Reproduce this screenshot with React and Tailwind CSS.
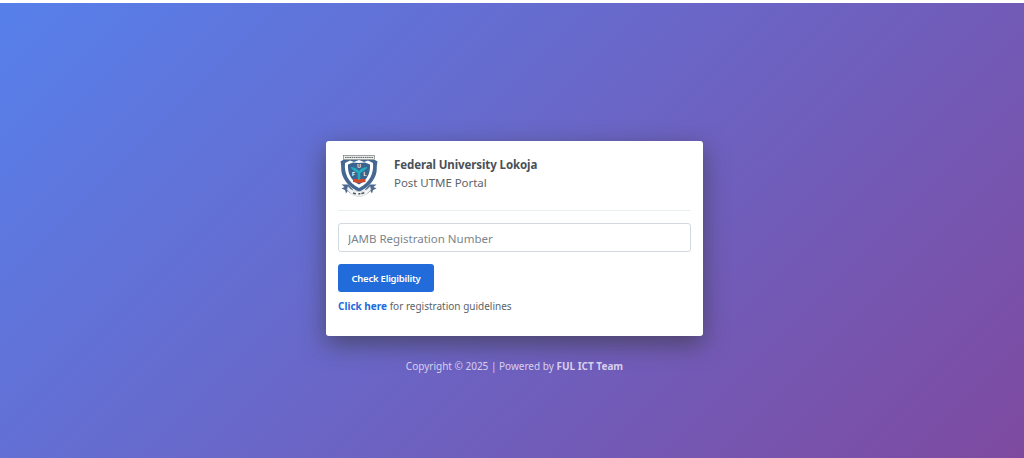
function Crest() {
  return (
    <svg viewBox="0 0 40 42" className="h-[42px] w-10 shrink-0">
      <path
        d="M3 5H35L37.5 6.500C36.500 10 37 14 36.500 17C35 25 29 32 19 37C9 32 3 25 1.500 17C1 14 1.500 10 0.500 6.500Z"
        fill="#456791"
      />
      <path
        d="M5 8L10 5.500L14 7L19 5L24 7L28 5.500L33 8C34 18 30 27.500 19 33C8 27.500 4 18 5 8Z"
        fill="#fff"
      />
      <path
        d="M8 9.500L13 7.500L19 8L25 7.500L30 9.500C30.500 18 27.500 25 19 29.500C10.500 25 7.500 18 8 9.500Z"
        fill="#3b6390"
      />
      <rect x="3.500" y="0.500" width="31" height="4" fill="#eef0f0" stroke="#777c7e" strokeWidth="0.700" />
      <path d="M5 2.400H33" stroke="#5b5f62" strokeWidth="1" strokeDasharray="1.600 0.600" />
      <path
        d="M10.500 12C14 12 17 13.500 19 16C21 13.500 24 12 27.500 12C26 15 23.500 16.500 20.300 18V25H17.700V18C14.500 16.500 12 15 10.500 12Z"
        fill="#25abc0"
      />
      <path d="M13 24.500C15 23.500 17 23.500 19 25C21 23.500 23 23.500 25.500 24.500V27L19 28L13 27Z" fill="#d24a2c" />
      <g fill="#fff" fontFamily="Liberation Sans" fontSize="5" fontWeight="bold" textAnchor="middle">
        <text x="19" y="12.500">U</text>
        <text x="13.500" y="21">F</text>
        <text x="25" y="21">L</text>
      </g>
      <path
        d="M1.500 29.500L8.500 29.500L13 34.500L10.500 38.500L7.500 36L6 38.500L5 35L1.500 33.500L4.500 32ZM36.500 29.500L29.500 29.500L25 34.500L27.500 38.500L30.500 36L32 38.500L33 35L36.500 33.500L33.500 32Z"
        fill="#4c698d"
      />
      <path
        d="M8 31.500C11 35.500 15 36.500 19 36.500C23 36.500 27 35.500 30 31.500L31 34.500C28 39 23 41.500 19 41.500C15 41.500 10 39 7 34.500Z"
        fill="#f4f5f5"
        stroke="#b9c1ca"
        strokeWidth="0.500"
      />
      <path d="M13 38Q19 40 26 37.200" fill="none" stroke="#4c545e" strokeWidth="1.600" strokeDasharray="3 2.500 2 1" />
    </svg>
  );
}

export default function App() {
  return (
    <div className="flex h-screen flex-col overflow-hidden bg-white pt-[3px] font-['Noto_Sans',sans-serif]">
      <main className="flex flex-1 flex-col items-center bg-[linear-gradient(135deg,#5780eb_0%,#7e4aa0_100%)] pt-[138px]">
        <section className="ml-[5px] h-[195px] w-[377px] rounded-[3px] bg-white px-3 pt-3 shadow-[0_8px_24px_rgba(50,50,50,0.6)]">
          <header className="flex h-[58px] border-b border-[#e9efef] pl-0.5 pt-0.5">
            <Crest />
            <div className="ml-[14px] mt-px text-[11.5px] leading-[18px] text-[#495057]">
              <h1 className="font-bold tracking-[-0.1px]">Federal University Lokoja</h1>
              <p className="tracking-[-0.05px] text-[#5c6369]">Post UTME Portal</p>
            </div>
          </header>
          <form className="pt-3" onSubmit={(e) => e.preventDefault()}>
            <input
              type="text"
              placeholder="JAMB Registration Number"
              className="block h-[29px] w-full rounded-[3px] border border-[#d3d9df] px-[9px] pt-0.5 text-[11.5px] outline-none placeholder:text-[#7b848b]"
            />
            <button
              type="submit"
              className="mt-3 block h-7 w-24 rounded-[3px] bg-[#216bda] pt-0.5 text-[9.5px] font-semibold tracking-[-0.22px] text-white"
            >
              Check Eligibility
            </button>
          </form>
          <p className="mt-[6px] text-[10px] leading-4 text-[#5c6369]">
            <a href="#" className="font-bold text-[#216bda]">Click here</a> for registration guidelines
          </p>
        </section>
        <footer className="ml-[5px] mt-[22px] text-[10px] leading-4 text-[#d8d0ed]">
          Copyright © 2025 | Powered by <b>FUL ICT Team</b>
        </footer>
      </main>
    </div>
  );
}
